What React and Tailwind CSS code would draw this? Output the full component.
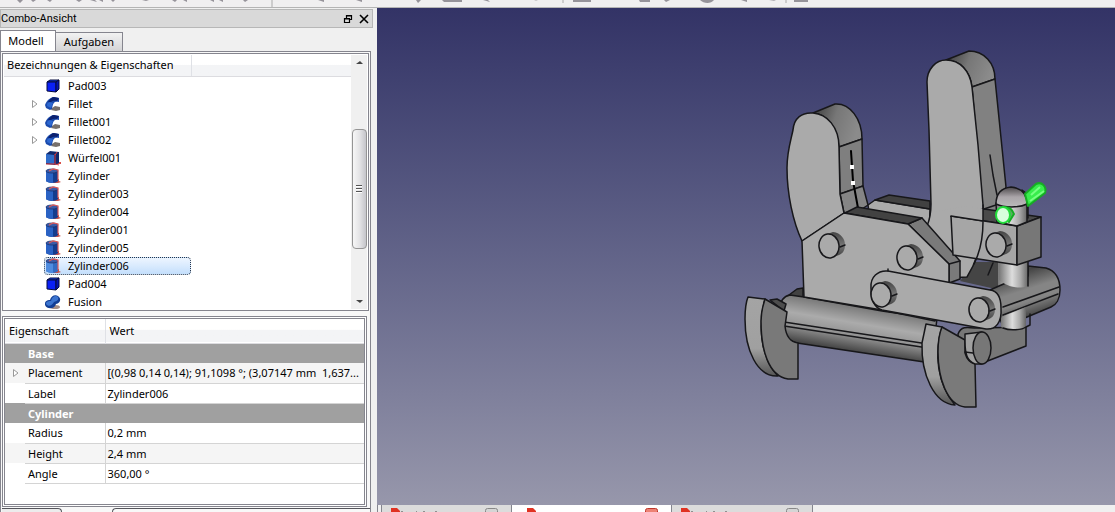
import React from "react";

const treeItems = [
  { name: "Pad003", icon: "pad" },
  { name: "Fillet", icon: "fillet", children: true },
  { name: "Fillet001", icon: "fillet", children: true },
  { name: "Fillet002", icon: "fillet", children: true },
  { name: "Würfel001", icon: "cube" },
  { name: "Zylinder", icon: "cylinder" },
  { name: "Zylinder003", icon: "cylinder" },
  { name: "Zylinder004", icon: "cylinder" },
  { name: "Zylinder001", icon: "cylinder" },
  { name: "Zylinder005", icon: "cylinder" },
  { name: "Zylinder006", icon: "cylinder", selected: true },
  { name: "Pad004", icon: "pad" },
  { name: "Fusion", icon: "fusion" },
];

const groups = [
  {
    title: "Base",
    rows: [
      ["Placement", "[(0,98 0,14 0,14); 91,1098 °; (3,07147 mm  1,637...", true],
      ["Label", "Zylinder006"],
    ],
  },
  {
    title: "Cylinder",
    rows: [
      ["Radius", "0,2 mm"],
      ["Height", "2,4 mm"],
      ["Angle", "360,00 °"],
    ],
  },
];

function ItemIcon({ type, faded }) {
  const body = faded ? "#4f8ce0" : "#2a62c4";
  const shade = faded ? "#326cc4" : "#143c8e";
  return (
    <svg viewBox="0 0 16 16" className="h-4 w-4 shrink-0" aria-hidden="true">
      {type === "pad" && (
        <g stroke="#050a3c" strokeWidth="1" strokeLinejoin="round">
          <path d="M2 4 5 2h9l-3 2z" fill="#1440e8" />
          <path d="M2 4h9v10l-9-1z" fill="#0a20f5" />
          <path d="m11 4 3-2v9l-3 3z" fill="#0614b4" />
        </g>
      )}
      {type === "fillet" && (
        <g>
          <path d="m7 12 3-2 5 1v3l-4 1-5-1z" fill="#77706c" />
          <path d="M0 9C2 4 5 2 8 1l6 1v4c-4-1-6 0-7 7l-2 1-4-2z" fill="#1b4bad" />
          <path d="M3 6c2-3 4-5 6-5l5 1-2 3C8 4 6 5 5 8z" fill="#0c2170" />
          <path d="M2 10c0-3 1-4 3-4l3 1-2 5z" fill="#2d68d1" />
        </g>
      )}
      {type === "cube" && (
        <g>
          <path d="M10 13h6" stroke="#d95048" strokeWidth="2" />
          <path d="m1 4 4-3 9 1v11l-4 2-9-1z" fill="#10296c" />
          <path d="m1 4 8 1v9l-8-1z" fill="#2e6cc9" />
          <path d="M1 14h9V4M10 5l2-3M10 14l4 1" stroke="#d8383c" strokeWidth="1" fill="none" />
        </g>
      )}
      {type === "cylinder" && (
        <g>
          <path d="M11 11h3v2l2 1-3 1h-5z" fill="#c4534e" />
          <path d="M1 3v10c1 2 10 3 12 0V3z" fill={shade} />
          <path d="M1 3v10c1 1 4 2 7 2V5z" fill={body} />
          <ellipse cx="7" cy="3" rx="6" ry="2" fill="#3a5ba8" stroke="#172c66" strokeWidth=".7" />
          <path d="M4 3 8 1l5 1v10" stroke="#dd5a59" strokeWidth="1.2" fill="none" />
        </g>
      )}
      {type === "fusion" && (
        <g>
          <ellipse cx="10" cy="13" rx="5" ry="2" fill="#a58f88" />
          <path d="M0 10c0-3 2-4 5-4 1-4 5-6 8-4 4 3 2 7-2 8-1 5-9 6-11 1z" fill="#123e95" />
          <path d="M1 10c0-3 3-3 5-3 1-5 5-6 7-4 1 3-1 4-4 5-2 4-6 5-8 2z" fill="#3c75d0" />
        </g>
      )}
    </svg>
  );
}

function Expander({ label }) {
  return (
    <button type="button" aria-label={label} className="flex h-4 w-4 shrink-0 items-center justify-center">
      <svg viewBox="0 0 8 10" className="h-2.5 w-2">
        <path d="M1.5 1.5v7L6 5z" fill="#fff" stroke="#999" />
      </svg>
    </button>
  );
}

function Tree() {
  return (
    <div className="flex h-[262px] w-[367px] overflow-hidden border border-[#85858e] bg-white p-px">
      <div className="flex min-w-0 flex-1 flex-col">
        <div className="flex h-[22px] shrink-0 border-b border-[#dcdce0] bg-linear-to-b from-white from-45% to-[#f3f4f6] to-50%">
          <span className="w-[188px] border-r border-[#dfe1e6] pl-[3px] leading-5 whitespace-nowrap">Bezeichnungen &amp; Eigenschaften</span>
        </div>
        <ul className="min-h-0 flex-1 overflow-hidden">
          {treeItems.map((item) => (
            <li key={item.name} className="flex h-[18px] items-center pl-[23px]">
              {item.children ? <Expander label={`${item.name} aufklappen`} /> : <span className="w-4 shrink-0" />}
              <button
                type="button"
                className={
                  item.selected
                    ? "ml-px flex h-[18px] w-[147px] items-center gap-[7px] rounded-sm border border-dotted border-[#26364c] bg-linear-to-b from-[#edf5ff] to-[#c4dffc] text-left"
                    : "ml-px flex h-[18px] items-center gap-[7px] pl-px text-left"
                }
              >
                <ItemIcon type={item.icon} faded={item.selected} />
                <span>{item.name}</span>
              </button>
            </li>
          ))}
          <li className="pl-[50px]">
            <svg viewBox="0 0 8 4" className="h-1 w-2" aria-hidden="true">
              <path d="m1 4 4-3 3 3z" fill="#777" />
            </svg>
          </li>
        </ul>
      </div>
      <div className="flex w-4 shrink-0 flex-col items-center bg-[#f0f0f0]" aria-hidden="true">
        <svg viewBox="0 0 16 18" className="h-[18px] w-4"><path d="m5 9 4-3 3 3z" fill="#444" /></svg>
        <div className="mt-14 flex h-[120px] w-[15px] flex-col items-center justify-center gap-px rounded-sm border border-[#959595] bg-linear-to-r from-[#f7f7f7] via-[#e4e4e6] to-[#c5c5ca]">
          <span className="h-0.5 w-1.5 border-t border-[#555] bg-white" />
          <span className="h-0.5 w-1.5 border-t border-[#555] bg-white" />
          <span className="h-0.5 w-1.5 border-t border-[#555] bg-white" />
        </div>
        <svg viewBox="0 0 16 18" className="mt-auto h-[18px] w-4"><path d="m5 9 4 3 3-3z" fill="#444" /></svg>
      </div>
    </div>
  );
}

function Properties() {
  return (
    <div className="mt-[5px] h-[191px] w-[365px] shrink-0 border border-[#85858e] bg-white p-px">
      <div className="h-full overflow-hidden border border-[#85858e]">
        <table className="w-full table-fixed border-collapse text-left">
          <colgroup>
            <col className="w-5" />
            <col className="w-20" />
            <col />
          </colgroup>
          <thead>
            <tr className="h-6 border-b border-[#dcdce0] bg-linear-to-b from-white from-45% to-[#f3f4f6] to-50%">
              <th colSpan="2" className="border-r border-[#dfe1e6] p-0 pl-1 font-normal">Eigenschaft</th>
              <th className="p-0 pl-1 font-normal">Wert</th>
            </tr>
          </thead>
          {groups.map((group) => (
            <tbody key={group.title}>
              <tr className="h-5 bg-[#a0a0a0] text-white">
                <th className="p-0" />
                <th colSpan="2" className="p-0 pl-[3px] leading-[19px] font-bold">{group.title}</th>
              </tr>
              {group.rows.map(([name, value, expandable]) => (
                <tr key={name} className={name === "Placement" || name === "Height" ? "h-5 bg-[#f5f5f5]" : "h-5 bg-white"}>
                  <td className="p-0 pl-[3px]">{expandable && <Expander label={`${name} aufklappen`} />}</td>
                  <td className="border-r border-b border-[#d4d4d4] p-0 pl-[3px] leading-[19px]">{name}</td>
                  <td className="overflow-hidden border-b border-[#d4d4d4] p-0 pl-0.5 leading-[19px] whitespace-pre">{value}</td>
                </tr>
              ))}
            </tbody>
          ))}
        </table>
      </div>
    </div>
  );
}

function Pin({ x, y }) {
  return (
    <g>
      <path d={`M${x - 2} ${y - 12}l6-2c8 1 12 7 12 13 0 6-3 9-6 10l-8 3z`} fill="url(#pinSide)" stroke="none" />
      <ellipse cx={x} cy={y} rx="10" ry="12" fill="#aaa" transform={`rotate(-8 ${x} ${y})`} />
      <path d={`M${x + 11} ${y + 1}l5-2`} fill="none" />
    </g>
  );
}

function Model() {
  return (
    <svg viewBox="377 8 738 497" className="h-full w-full" role="img" aria-label="3D-Modell">
      <defs>
        <linearGradient id="pinSide" x1="0" y1="0" x2="0" y2="1">
          <stop offset="0" stopColor="#444" /><stop offset=".5" stopColor="#757575" /><stop offset="1" stopColor="#3e3e3e" />
        </linearGradient>
        <linearGradient id="cap" x1="0" y1="0" x2="1" y2=".3">
          <stop offset="0" stopColor="#383838" /><stop offset=".5" stopColor="#777" /><stop offset="1" stopColor="#8b8b8b" />
        </linearGradient>
        <linearGradient id="rod" gradientUnits="userSpaceOnUse" x1="860" y1="304" x2="852" y2="352">
          <stop offset="0" stopColor="#707070" /><stop offset=".4" stopColor="#ababab" /><stop offset=".65" stopColor="#949494" /><stop offset="1" stopColor="#404040" />
        </linearGradient>
        <linearGradient id="arm" gradientUnits="userSpaceOnUse" x1="1021" y1="272" x2="1035" y2="316">
          <stop offset="0" stopColor="#454545" /><stop offset=".4" stopColor="#858585" /><stop offset=".65" stopColor="#858585" /><stop offset="1" stopColor="#404040" />
        </linearGradient>
        <linearGradient id="post" x1="0" y1="0" x2="1" y2="0">
          <stop offset="0" stopColor="#777" /><stop offset=".45" stopColor="#ddd" /><stop offset=".75" stopColor="#aaa" /><stop offset="1" stopColor="#666" />
        </linearGradient>
        <linearGradient id="dome" x1="0" y1="0" x2="0" y2="1">
          <stop offset="0" stopColor="#4c484b" /><stop offset=".5" stopColor="#aaa5a9" /><stop offset="1" stopColor="#bbb" />
        </linearGradient>
        <linearGradient id="foot" x1="0" y1="0" x2="0" y2="1">
          <stop offset="0" stopColor="#a4a4a4" /><stop offset=".65" stopColor="#a0a0a0" /><stop offset="1" stopColor="#555" />
        </linearGradient>
      </defs>
      <g stroke="#17171a" strokeWidth="1.5" strokeLinejoin="round" strokeLinecap="round">
        <path d="M868 205 875 200 930 209 929 240 870 220z" fill="#aaa" />
        <path d="M875 200 889 195 930 201V209z" fill="#414141" />
        <path d="M960 281 975 262 1004 262 1018 274 1000 290z" fill="#454545" stroke="none" />

        <path d="M813 113 835 104C850 103 862 119 862 139L839 147C837 127 827 114 813 113z" fill="url(#cap)" />
        <path d="M839 147 862 139 863 186 840 194z" fill="#7f7f7f" />
        <path d="M840 194 863 186 868 205 862 209 844 213z" fill="#858585" />
        <path d="M802 241C793 222 787 194 787 168 787 151 791 140 793 130 794 118 802 112 813 113 827 114 839 127 839 147L840 194 844 213z" fill="#aaa" />
        <path d="M851 151 853 181 858 208" fill="none" strokeWidth="2" stroke="#000" />
        <path d="M850 165h4v4h-4zM851 181h4v4h-4z" fill="#fff" stroke="none" />

        <path d="M946 60 969 51C984 51 995 63 995 79L972 87C970 71 960 60 946 60z" fill="url(#cap)" />
        <path d="M972 87 995 79 1006 187 998 222 984 230z" fill="#818181" />
        <path d="M984 209 996 205M990 155 993 175 997 195" fill="none" />
        <path d="M927 226C930 219 931 213 931 204L929 130 927 82C927 69 936 60 946 60 960 60 970 71 972 87L978 145 983 205C985 232 980 256 967 277L948 278z" fill="#aaa" />

        <path d="M785 298 797 289 803 288V302z" fill="#424242" />
        <path d="M779 310C780 301 784 296 790 295L804 297 882 311 937 319 931 363 797 343C785 340 779 328 779 310z" fill="url(#rod)" />
        <path d="M784 322 928 344M784 326 928 348" fill="none" strokeWidth="1.6" />
        <path d="M770 300 777 299 786 304 784 311z" fill="#4d4d4d" />
        <path d="M748 297 765 299C758 325 760 357 778 376 757 377 745 350 745 319 745 311 746 302 748 297z" fill="url(#foot)" />
        <path d="M765 299 787 312 785 326C786 336 790 342 798 343V379L788 379C768 376 761 349 761 321 761 312 763 305 765 299z" fill="#797979" />

        <path d="M908 224 922 218 960 261V279L949 283V264z" fill="#7a7a7a" />
        <path d="M845 213 857 207 922 218 908 224z" fill="#424242" />
        <path d="M802 241 844 213 908 224 949 264V284L935 321 882 310 804 297z" fill="#aaa" />
        <path d="M949 264 960 261" fill="none" />
        <Pin x={829} y={246} />
        <Pin x={907} y={258} />

        <path d="M998 262H1028V289H998z" fill="url(#post)" stroke="none" />
        <path d="M990 290 1008 282 1028 276V266L1046 268C1056 271 1060 279 1060 290 1060 299 1056 305 1051 307L1003 327z" fill="url(#arm)" />
        <path d="M999 260H1028V286C1017 290 1007 286 999 280z" fill="url(#post)" stroke="none" />
        <path d="M1028 262V286M1003 307 1059 287M1003 315 1058 294M993 263 988 275" fill="none" />
        <path d="M958 334C961 326 967 327 975 328L1026 327V346L985 362 959 344z" fill="#777" />
        <path d="M1001 327V317L1026 307V327C1019 331 1006 331 1001 327z" fill="url(#post)" stroke="none" />
        <path d="M1003 328C1010 331 1022 330 1026 327L1030 325V314" fill="none" />

        <path d="M871 288C870 277 878 270 888 271L990 290C998 291 1001 298 1001 308 1002 322 996 330 986 329L882 310C875 308 871 300 871 288z" fill="#aaa" />
        <path d="M888 271V269" />
        <Pin x={881} y={295} />
        <Pin x={979} y={310} />

        <path d="M951 216 984 209 1041 217 1017 226z" fill="#4a4a4a" />
        <path d="M951 216 1017 226V265L953 255z" fill="#a6a6a6" />
        <path d="M951 216 983 221V209L967 206 934 212z" fill="#aaa" stroke="none" />
        <path d="M951 216 983 221V205" fill="none" />
        <path d="M1017 226 1041 217V257L1017 265z" fill="#777" />
        <path d="M983 222C983 236 980 252 974 264" fill="none" />
        <Pin x={996} y={245} />
        <path d="M996 203H1027V222L1017 226 997 222z" fill="url(#post)" />
        <path d="M996 204C996 193 1002 188 1011 187 1021 188 1027 194 1027 204 1019 208 1004 208 996 204z" fill="url(#dome)" />
        <path d="M1022 190 1026 193 1028 205V218" fill="none" />

        <path d="M926 324 942 327C934 353 937 384 955 405 934 404 921 374 922 343z" fill="url(#foot)" />
        <path d="M942 327 965 340V353C967 360 971 363 975 364L976 407H965C947 405 938 378 938 352 938 342 939 334 942 327z" fill="#7a7a7a" />
        <path d="M965 334 982 332V364L975 364C967 361 965 354 965 341z" fill="#a0a0a0" />
        <ellipse cx="982" cy="348" rx="9" ry="16" fill="#777" />
        <path d="M965 352 973 353" fill="none" />
      </g>
      <g stroke="#16ad24" strokeWidth="2" strokeLinejoin="round">
        <path d="M1025 194 1036 184C1042 181 1047 187 1045 193L1028 206z" fill="#38ed4c" />
        <path d="M1031 195 1040 187M1030 201 1044 191" stroke="#77ff82" />
        <path d="M1002 208C1008 206 1012 209 1014 214L1009 222z" fill="#5cac62" />
        <ellipse cx="1003" cy="215" rx="7" ry="8" fill="#d7ffdd" stroke="#22dc3b" />
      </g>
    </svg>
  );
}

function DocTab({ active, name, className }) {
  return (
    <button
      type="button"
      aria-label={name}
      className={`${className} flex h-full shrink-0 items-end justify-between overflow-hidden border-r border-[#85858e] ${active ? "bg-white pr-3 pl-3.5" : "bg-[#dcdcdc] pr-3 pl-2"}`}
    >
      <svg viewBox="0 0 64 5" className="h-[5px] w-16">
        <path d="M1 1h6l3 3v2H1z" fill="#e03222" />
        {active ? null : <path d="M11 5h2M26 5h1M34 4v1M45 5h2" stroke="#444" />}
      </svg>
      <svg viewBox="0 0 14 4" className="h-1 w-3.5">
        <rect x=".5" y=".5" width="12" height="8" rx="2" fill={active ? "#ed8174" : "#d5d5d5"} stroke={active ? "#bc372c" : "#888"} />
      </svg>
    </button>
  );
}

export default function App() {
  return (
    <div className="flex h-screen flex-col overflow-hidden bg-[#f0f0f0] font-['Noto_Sans','Open_Sans',sans-serif] text-[11px] leading-4 text-black">
      <header className="h-2 shrink-0 border-b border-[#b4b4b4] bg-[#f0eff0]">
        <svg viewBox="0 0 1115 7" preserveAspectRatio="xMinYMin slice" className="h-[7px] w-full" aria-hidden="true">
          <g fill="#96939a">
            <path d="M17 0h6l-3 3zM31 0h5l-3 2zM47 0h5l-2 2zM76 0h6l-3 2zM90 0h5l2 2zM99 0h4v2zM111 0h4l-2 2zM142 0h7l-3 1zM172 0h5l-2 2zM183 0h4v2zM210 0h4v2zM219 0h4v2zM243 0h5l-3 2zM318 0h6v2zM356 0h6v2zM416 0h5l-3 3zM442 0h20v2h-18zM483 0h5l2 2zM534 0h2l2 1zM573 0h18v2h-18zM639 0h11v2h-10zM664 0h6l-4 2zM700 0h14c-3 4-10 4-14 0zM741 0h6v2zM769 0h5l2 1zM794 0h14v2h-14z" />
          </g>
          <path d="M272 0v7M563 0v3M786 0v3" stroke="#aaa" />
        </svg>
      </header>

      <div className="flex min-h-0 flex-1">
        <aside className="flex w-[377px] shrink-0 flex-col overflow-hidden pt-px">
          <div className="mr-1 flex h-[19px] shrink-0 items-center border border-[#b7b7b7] bg-[#d9d9d9]">
            <h2 className="flex-1 font-['Roboto','Noto_Sans',sans-serif]">Combo-Ansicht</h2>
            <button type="button" aria-label="Andocken" className="flex h-4 w-4 items-center justify-center">
              <svg viewBox="0 0 10 10" className="h-2.5 w-2.5"><path d="M3.5 4V1.5h5v4H7M3 2h6M1.5 4.5h5v4h-5zM1 5h6" fill="none" stroke="#000" strokeWidth="1.2" /></svg>
            </button>
            <button type="button" aria-label="Schließen" className="flex h-4 w-4 items-center justify-center">
              <svg viewBox="0 0 10 10" className="h-2.5 w-2.5"><path d="m1 1 8 8M9 1 1 9" stroke="#000" strokeWidth="1.6" /></svg>
            </button>
          </div>

          <div role="tablist" className="mt-0.5 flex h-[21px] shrink-0 items-end">
            <button type="button" role="tab" aria-selected="true" className="h-[21px] w-14 border border-b-0 border-[#85858e] bg-white pr-1">Modell</button>
            <button type="button" role="tab" aria-selected="false" className="h-[19px] w-[67px] border border-b-0 border-l-0 border-[#85858e] bg-linear-to-b from-[#f2f2f2] to-[#d4d4d6]">Aufgaben</button>
          </div>

          <div className="mr-1.5 flex min-h-0 flex-1 flex-col border border-b-0 border-[#85858e] bg-[#f8f8f8] pt-px pl-px">
            <Tree />
            <Properties />
            <div className="mt-px flex h-1 shrink-0 gap-[50px]">
              <span className="w-[60px] rounded-tr-sm border-t border-r border-[#55555c] bg-[#ececec]" />
              <span className="flex-1 rounded-tl-sm border-t border-l border-[#55555c]" />
            </div>
          </div>
        </aside>

        <main className="flex min-w-0 flex-1 flex-col">
          <section className="min-h-0 flex-1 overflow-hidden bg-linear-to-b from-[#333366] to-[#9797ab]">
            <Model />
          </section>
          <nav className="flex h-[7px] shrink-0 border-l border-[#85858e] pl-[3px]" aria-label="Dokumente">
            <DocTab name="Dokument 1" className="w-[131px] border-l" />
            <DocTab name="Dokument 2" active className="w-40" />
            <DocTab name="Dokument 3" className="w-[141px]" />
          </nav>
        </main>
      </div>
    </div>
  );
}
